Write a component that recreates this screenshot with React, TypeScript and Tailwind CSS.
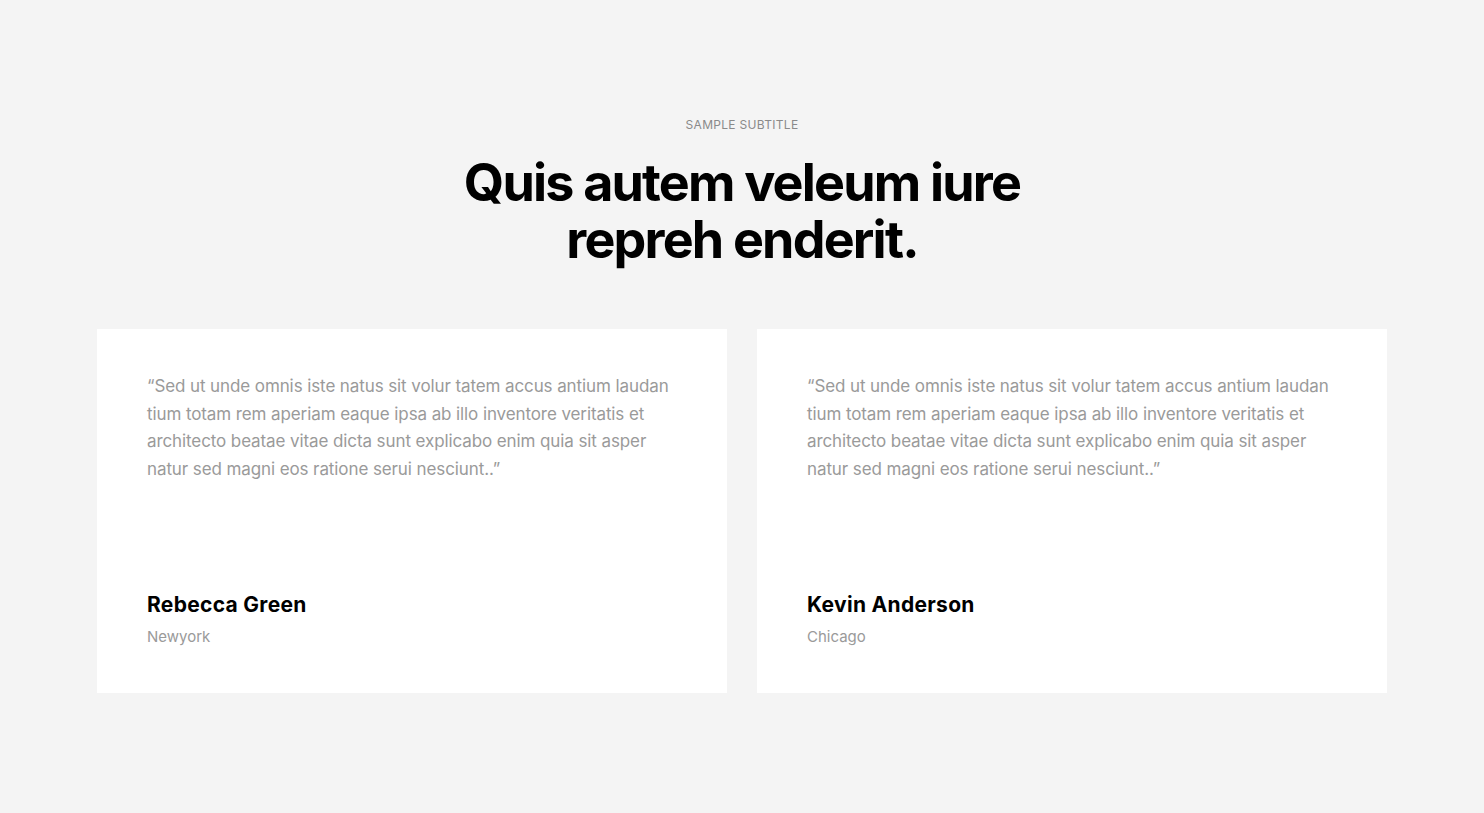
const testimonials = [
  {
    quote:
      '“Sed ut unde omnis iste natus sit volur tatem accus antium laudan tium totam rem aperiam eaque ipsa ab illo inventore veritatis et architecto beatae vitae dicta sunt explicabo enim quia sit asper natur sed magni eos ratione serui nesciunt..”',
    name: 'Rebecca Green',
    city: 'Newyork',
  },
  {
    quote:
      '“Sed ut unde omnis iste natus sit volur tatem accus antium laudan tium totam rem aperiam eaque ipsa ab illo inventore veritatis et architecto beatae vitae dicta sunt explicabo enim quia sit asper natur sed magni eos ratione serui nesciunt..”',
    name: 'Kevin Anderson',
    city: 'Chicago',
  },
]

export default function App() {
  return (
    <div className="min-h-screen bg-[#f4f4f4] font-['Inter',sans-serif]">
      <section className="pt-[117px] pb-[120px] px-[97px]">
        {/* Heading */}
        <div className="text-center">
          <p className="text-[12px] leading-[16px] text-[#8a8a8a] uppercase tracking-[0.3px]">Sample Subtitle</p>
          <h2 className="mt-[21px] text-[52px] leading-[57px] font-bold text-black tracking-[-1.8px]">
            Quis autem veleum iure
            <br />
            repreh enderit.
          </h2>
        </div>

        {/* Cards */}
        <div className="mt-[61px] grid grid-cols-2 gap-[30px]">
          {testimonials.map((t) => (
            <div key={t.name} className="bg-white px-[50px] pt-[44px] pb-[46px]">
              <p className="text-[17px] leading-[27.5px] text-[#9a9a9a] tracking-[-0.1px]">
                {t.quote}
              </p>
              <h3 className="mt-[108px] text-[21px] leading-[28px] font-bold text-black tracking-[0.3px]">
                {t.name}
              </h3>
              <p className="mt-[8px] text-[15px] leading-[20px] text-[#9a9a9a] tracking-[0px]">{t.city}</p>
            </div>
          ))}
        </div>
      </section>
    </div>
  )
}
